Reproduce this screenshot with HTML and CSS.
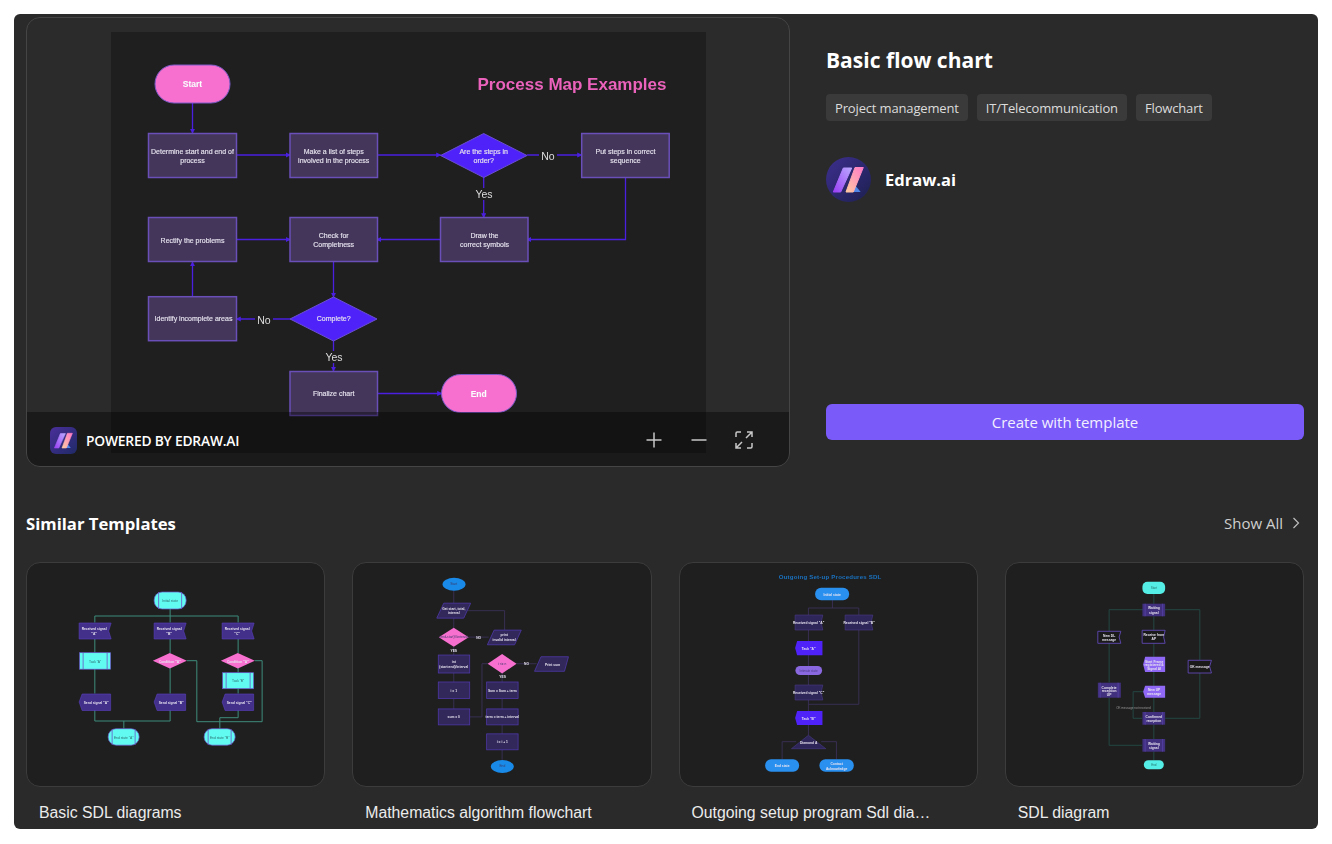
FILE: index.html
```html
<!DOCTYPE html>
<html lang="en">
<head>
  <meta charset="UTF-8" />
  <meta name="viewport" content="width=device-width, initial-scale=1.0"/>
  <title>Basic flow chart</title>
  <link rel="stylesheet" href="styles.css">
</head>
<body>
  <main class="panel">
    <section class="top">
      <div class="preview">
        <!-- viewBox uses the coordinates of the page so shapes are easy to measure -->
        <svg class="chart" viewBox="111 32 595 421" width="595" height="421">
          <defs>
            <marker id="arrowBlue" viewBox="0 0 6 6" refX="5" refY="3" markerWidth="4" markerHeight="4" markerUnits="strokeWidth" orient="auto"><path d="M0 0L6 3L0 6Z" fill="#4a1fe0"/></marker>
            <linearGradient id="barLeft" x1="0" y1="1" x2="1" y2="0"><stop offset="0" stop-color="#9a3ff5"/><stop offset="1" stop-color="#b9a8ff"/></linearGradient>
            <linearGradient id="barRight" x1="0" y1="1" x2="1" y2="0"><stop offset="0" stop-color="#ffc9a0"/><stop offset="1" stop-color="#ff7ac8"/></linearGradient>
            <symbol id="logoMark" viewBox="0 0 45 45">
              <path d="M17.3 11H25.7L14.7 35H7.3Z" fill="url(#barLeft)" stroke="url(#barLeft)" stroke-linejoin="round"/>
              <path d="M27.3 26L34.7 35H24Z" fill="#4f86e8"/>
              <path d="M29 10.5H37.3L27.3 35H20Z" fill="url(#barRight)" stroke="url(#barRight)" stroke-linejoin="round"/>
            </symbol>
          </defs>

          <text class="map-title" x="572" y="90">Process Map Examples</text>

          <g class="flow">
            <path d="M192.500 103V133"/>
            <path d="M236.500 155H290"/>
            <path d="M377 155H440.500"/>
            <path d="M527 155H581.500"/>
            <path d="M483.700 177V217.500"/>
            <path d="M625.500 177.500V239.500H527"/>
            <path d="M440.500 239.500H377"/>
            <path d="M236.500 239.500H290"/>
            <path d="M333.500 262V297"/>
            <path d="M290 319H236.500"/>
            <path d="M192.500 297V262"/>
            <path d="M333.500 341V371"/>
            <path d="M377 393.500H441.500"/>
          </g>

          <rect class="pill" x="155" y="65" width="75" height="38" rx="19"/>
          <rect class="pill" x="441.500" y="374.500" width="75" height="38" rx="19"/>
          <g class="box">
            <rect x="148.500" y="133.500" width="88" height="44"/>
            <rect x="290" y="133.500" width="87.500" height="44"/>
            <rect x="581.700" y="133.500" width="87.500" height="44"/>
            <rect x="148.500" y="217.500" width="88" height="44"/>
            <rect x="290" y="217.500" width="87.500" height="44"/>
            <rect x="440.500" y="217.500" width="87.500" height="44"/>
            <rect x="148.500" y="296.700" width="88" height="44"/>
            <rect x="290" y="371.500" width="87.500" height="44"/>
          </g>
          <g class="decision">
            <path d="M440.500 155.500L483.700 133.500L527 155.500L483.700 177.500Z"/>
            <path d="M290 319L333.500 297L377 319L333.500 341Z"/>
          </g>

          <g class="node-text">
            <text class="strong" x="192.500" y="87">Start</text>
            <text class="strong" x="478.700" y="397">End</text>
            <text x="192.500" y="153.500">Determine start and end of</text>
            <text x="192.500" y="162.500">process</text>
            <text x="333.700" y="153.500">Make a list of steps</text>
            <text x="333.700" y="162.500">involved in the process</text>
            <text x="483.700" y="153.500">Are the steps in</text>
            <text x="483.700" y="162.500">order?</text>
            <text x="625.500" y="153.500">Put steps in correct</text>
            <text x="625.500" y="162.500">sequence</text>
            <text x="192.500" y="242.500">Rectify the problems</text>
            <text x="333.700" y="238">Check for</text>
            <text x="333.700" y="246.500">Completness</text>
            <text x="484.500" y="238">Draw the</text>
            <text x="484.500" y="246.500">correct symbols</text>
            <text x="193.500" y="321">Identify incomplete areas</text>
            <text x="333.700" y="321">Complete?</text>
            <text x="333.700" y="396">Finalize chart</text>
          </g>
          <g class="flow-label">
            <rect class="label-bg" x="539" y="149" width="18" height="12"/>
            <text x="548" y="159.500">No</text>
            <rect class="label-bg" x="475" y="188" width="18" height="12"/>
            <text x="484" y="198">Yes</text>
            <rect class="label-bg" x="255" y="313" width="18" height="12"/>
            <text x="264" y="323.500">No</text>
            <rect class="label-bg" x="325" y="351" width="18" height="12"/>
            <text x="334" y="361">Yes</text>
          </g>
        </svg>

        <div class="preview-bar">
          <div class="logo-square"><svg viewBox="0 0 45 45" width="27" height="27"><use href="#logoMark"/></svg></div>
          <span class="powered">POWERED BY EDRAW.AI</span>
          <div class="bar-tools">
            <svg class="tool" viewBox="0 0 18 18" width="18" height="18"><path d="M9 1.500V16.500M1.500 9H16.500"/></svg>
            <svg class="tool" viewBox="0 0 18 18" width="18" height="18"><path d="M1.500 9H16.500"/></svg>
            <svg class="tool" viewBox="0 0 18 18" width="18" height="18"><path d="M1 6V2.200Q1 1 2.200 1H6M12 1H17V6M17 12V15.800Q17 17 15.800 17H12M6 17H1V12M11 7L16.500 1.500M7 11L1.500 16.500"/></svg>
          </div>
        </div>
      </div>

      <aside class="info">
        <h1>Basic flow chart</h1>
        <div class="tags">
          <span class="tag">Project management</span>
          <span class="tag">IT/Telecommunication</span>
          <span class="tag">Flowchart</span>
        </div>
        <div class="author">
          <div class="logo-round"><svg viewBox="0 0 45 45" width="45" height="45"><use href="#logoMark"/></svg></div>
          <span class="author-name">Edraw.ai</span>
        </div>
        <button class="create">Create with template</button>
      </aside>
    </section>

    <section class="similar">
      <div class="similar-head">
        <h2>Similar Templates</h2>
        <a class="show-all">Show All
          <svg viewBox="0 0 8 12" width="8" height="12"><path d="M1.500 1L6.500 6L1.500 11"/></svg>
        </a>
      </div>

      <div class="cards">
        <article class="card">
          <div class="thumb">
            <svg viewBox="27 563 297 223">
              <g class="link-green">
                <path d="M170 609V622.500"/>
                <path d="M94.700 622.500V616H238V622.500"/>
                <path d="M94.700 639V652.500"/>
                <path d="M94.700 669V693.500"/>
                <path d="M170 639V653"/>
                <path d="M170 668V693.500"/>
                <path d="M238 639V653"/>
                <path d="M238 668V672.500"/>
                <path d="M238 688.500V693.500"/>
                <path d="M94.700 710V721H170V710"/>
                <path d="M123.700 721V728.500"/>
                <path d="M238 710V717.700H219.700V728.500"/>
                <path d="M186.700 660.700H196.700V721.700H262V660.700H254.700"/>
              </g>
              <g class="cyan">
                <rect x="154" y="592" width="32" height="17" rx="8"/>
                <rect x="108" y="728.700" width="31" height="16.500" rx="8"/>
                <rect x="204" y="728.700" width="31" height="16.500" rx="8"/>
                <rect x="79.500" y="652.700" width="31" height="16.500"/>
                <rect x="222.500" y="672.700" width="31" height="16"/>
              </g>
              <g class="cyan-bars">
                <path d="M158.500 592V609M181.500 592V609M112 729V745M135 729V745M208 729V745M231 729V745"/>
                <path d="M83 653V669M107 653V669M226 673V689M250 673V689"/>
              </g>
              <g class="signal">
                <path d="M79 623H111L108.500 631L111 639H79Z"/>
                <path d="M154 623H186L183.500 631L186 639H154Z"/>
                <path d="M222 623H254L251.500 631L254 639H222Z"/>
                <path d="M82 694H110.500V710.500H82L79 702Z"/>
                <path d="M157 694H185.500V710.500H157L154 702Z"/>
                <path d="M225 694H253.500V710.500H225L222 702Z"/>
              </g>
              <g class="pink">
                <path d="M152.700 660.700L169.700 653L186.700 660.700L169.700 668.400Z"/>
                <path d="M220.700 660.700L237.700 653L254.700 660.700L237.700 668.400Z"/>
              </g>
              <g class="tiny">
                <text class="dark" x="170" y="602">Initial state</text>
                <text x="94" y="629.500">Received signal</text><text x="94" y="634.500">"A"</text>
                <text x="169" y="629.500">Received signal</text><text x="169" y="634.500">"B"</text>
                <text x="237" y="629.500">Received signal</text><text x="237" y="634.500">"C"</text>
                <text class="dark" x="95" y="662.500">Task "A"</text>
                <text x="169.700" y="662.500">Condition "A"</text>
                <text x="237.700" y="662.500">Condition "A"</text>
                <text class="dark" x="238" y="682">Task "B"</text>
                <text x="96" y="703.500">Send signal "A"</text>
                <text x="171" y="703.500">Send signal "B"</text>
                <text x="239" y="703.500">Send signal "C"</text>
                <text class="dark" x="123.500" y="738.500">End state "A"</text>
                <text class="dark" x="219.500" y="738.500">End state "B"</text>
              </g>
            </svg>
          </div>
          <p class="caption">Basic SDL diagrams</p>
        </article>

        <article class="card">
          <div class="thumb">
            <svg viewBox="353 563 298 223">
              <g class="link-dim">
                <path d="M454 590V603M454 618V628M454 647V655M454 673V682M454 699V709"/>
                <path d="M468 610.500H505V630"/>
                <path d="M469 637H489"/>
                <path d="M470 717H482.300V663.700H488"/>
                <path d="M517 663.700H537"/>
                <path d="M502.500 673V682M502.500 699V709M502.500 725V734M502.500 750V760"/>
              </g>
              <g class="blue">
                <ellipse cx="454.300" cy="584" rx="11.500" ry="6.500"/>
                <ellipse cx="502.700" cy="766.700" rx="11.500" ry="6.500"/>
              </g>
              <g class="outline">
                <path d="M444 603H471L464 618H437Z"/>
                <path d="M494.500 630H521.700L515 644.700H487.700Z"/>
                <path d="M541.500 656.700H569L565 671.300H535Z"/>
                <rect x="438.500" y="655" width="31.500" height="18"/>
                <rect x="438.500" y="682" width="31.500" height="16.500"/>
                <rect x="438.500" y="709" width="31.500" height="16"/>
                <rect x="487" y="682" width="31.500" height="16.500"/>
                <rect x="487" y="709" width="31.500" height="16"/>
                <rect x="487" y="734" width="31.500" height="16"/>
              </g>
              <g class="pink">
                <path d="M439 637.200L454 627.700L469 637.200L454 646.700Z"/>
                <path d="M488 663.700L502.500 654L517 663.700L502.500 673.500Z"/>
              </g>
              <g class="tiny">
                <text x="454" y="609.500">Get start, total,</text><text x="454" y="614">interval</text>
                <text x="504.500" y="636">print</text><text x="504.500" y="640.500">invalid interval</text>
                <text x="479" y="638.500">NO</text>
                <text x="454" y="651.500">YES</text>
                <text x="454" y="663">int</text><text x="454" y="667.500">(start:end)/interval</text>
                <text x="454" y="692">i = 1</text>
                <text x="454" y="718.500">sum = 0</text>
                <text x="527" y="665">NO</text>
                <text x="553" y="665.500">Print sum</text>
                <text x="503" y="678.500">YES</text>
                <text x="502.700" y="692">Sum = Sum + term</text>
                <text x="502.700" y="718.500">term = term + interval</text>
                <text x="502.700" y="743.500">i = i + 1</text>
              </g>
              <g class="tiny-dim">
                <text x="454" y="584.500">Start</text>
                <text x="454" y="638">(end-start)%interval</text>
                <text x="502.500" y="665">i &lt;= n</text>
                <text x="502.700" y="767.500">End</text>
              </g>
            </svg>
          </div>
          <p class="caption">Mathematics algorithm flowchart</p>
        </article>

        <article class="card">
          <div class="thumb">
            <svg viewBox="680 563 297 223">
              <text class="sdl-title" x="830" y="579">Outgoing Set-up Procedures SDL</text>
              <g class="link-dim">
                <path d="M832.300 600V608M808.300 615V608H858.700V615"/>
                <path d="M808.300 630V641M808.300 655V666M808.300 675V685M808.300 700V711M808.300 725V735.300"/>
                <path d="M858.700 630V704.300H808.300"/>
                <path d="M782 759.300V741.700H796M821 741.700H836.300V759.300"/>
              </g>
              <g class="sky">
                <rect x="815" y="587.700" width="34" height="12.500" rx="6"/>
                <rect x="765" y="759.300" width="34" height="12.500" rx="6"/>
                <rect x="819.300" y="759.300" width="34.400" height="12.500" rx="6"/>
              </g>
              <g class="signal-dim">
                <path d="M795 615H822.700L821 622.500L822.700 630H795Z"/>
                <path d="M845 615H872.700L871 622.500L872.700 630H845Z"/>
                <path d="M795 685H822.700L821 692.500L822.700 700H795Z"/>
                <path d="M791.300 748.700L808.300 735.300L825.700 748.700Z"/>
              </g>
              <g class="violet">
                <path d="M797 641H822.300V655.300H797L795 648Z"/>
                <path d="M797 711H822.300V725H797L795 718Z"/>
              </g>
              <rect class="lilac" x="795.300" y="666" width="26.700" height="9" rx="4.500"/>
              <g class="tiny">
                <text x="832" y="595.500">Initial state</text>
                <text x="808.500" y="624">Received signal "A"</text>
                <text x="859" y="624">Received signal "B"</text>
                <text x="808.500" y="649.500">Task "A"</text>
                <text x="808.500" y="694">Received signal "C"</text>
                <text x="808.500" y="719.500">Task "B"</text>
                <text x="808.500" y="744">Diamond A</text>
                <text x="782" y="767">End state</text>
                <text x="836.500" y="764.500">Contact</text>
                <text x="836.500" y="769.500">Acknowledge</text>
              </g>
              <text class="tiny-dim-text" x="808.500" y="672">Intimate state</text>
            </svg>
          </div>
          <p class="caption">Outgoing setup program Sdl diagram</p>
        </article>

        <article class="card">
          <div class="thumb">
            <svg viewBox="1006 563 297 223">
              <g class="link-teal">
                <path d="M1153.700 594V760"/>
                <path d="M1109 631V609.700H1199.700V660"/>
                <path d="M1109 643V682.500M1109 697.700V745.300H1142"/>
                <path d="M1199.700 673V718.300H1165"/>
                <path d="M1143 691.700H1133V718.300H1142"/>
              </g>
              <g class="cyan-plain">
                <rect x="1142.300" y="581.700" width="22.700" height="12.300" rx="5"/>
                <rect x="1143.700" y="760.300" width="20" height="9" rx="4.500"/>
              </g>
              <g class="state">
                <rect x="1142.300" y="603.700" width="22.700" height="12.600"/>
                <rect x="1097.700" y="682.700" width="23" height="15"/>
                <rect x="1142.300" y="712" width="22.700" height="12.700"/>
                <rect x="1142.300" y="739" width="22.700" height="12.700"/>
              </g>
              <g class="state-bars">
                <path d="M1145 603.700V616.300M1162.500 603.700V616.300M1100 682.700V697.700M1118 682.700V697.700M1145 712V724.700M1162.500 712V724.700M1145 739V751.700M1162.500 739V751.700"/>
              </g>
              <g class="signal-black">
                <path d="M1097.700 631.300H1120.700L1119 637L1120.700 643.300H1097.700Z"/>
                <path d="M1142 630.300H1165L1163.500 637L1165 643.300H1142Z"/>
                <path d="M1188 660.300H1211.300L1209.500 666.500L1211.300 673H1188Z"/>
              </g>
              <g class="lavender">
                <path d="M1145 656.700H1165V672H1145L1143 664.500Z"/>
                <path d="M1145 685.700H1165V697.700H1145L1143 691.700Z"/>
              </g>
              <g class="tiny">
                <text x="1109" y="636.500">New DL</text><text x="1109" y="640.500">message</text>
                <text x="1153.700" y="635.500">Receive from</text><text x="1153.700" y="640">AP</text>
                <text x="1199.500" y="668">OK message</text>
                <text x="1153.700" y="609">Waiting</text><text x="1153.700" y="613.500">signal</text>
                <text x="1154" y="662.500">Start Frame</text><text x="1154" y="666">registered &amp;</text><text x="1154" y="669.500">Signal AI</text>
                <text x="1154" y="690.500">New UP</text><text x="1154" y="695">message</text>
                <text x="1109" y="688.500">Complete</text><text x="1109" y="692">reception</text><text x="1109" y="696">UP</text>
                <text x="1153.700" y="717.500">Confirmed</text><text x="1153.700" y="722">reception</text>
                <text x="1153.700" y="744.500">Waiting</text><text x="1153.700" y="749">signal</text>
              </g>
              <text class="ok-label" x="1133.300" y="708.500">OK message not received</text>
              <g class="tiny-dark">
                <text x="1153.700" y="589">Start</text>
                <text x="1153.700" y="766">End</text>
              </g>
            </svg>
          </div>
          <p class="caption">SDL diagram</p>
        </article>
      </div>
    </section>
  </main>
</body>
</html>
```

FILE: styles.css
```css
html, body {
  margin: 0;
  height: 844px;
  overflow: hidden;
  background: #fff;
}
body {
  font-family: 'Open Sans', 'Noto Sans', sans-serif;
  color: #fff;
  padding-top: 14px;
  box-sizing: border-box;
}
.panel {
  margin: 0 14px;
  height: 815px;
  padding: 3px 14px 0 12px;
  box-sizing: border-box;
  background: #2a2a2a;
  border-radius: 6px;
  overflow: hidden;
}

/* top row */
.top {
  display: flex;
  gap: 36px;
  height: 450px;
}
.preview {
  position: relative;
  flex: 0 0 764px;
  box-sizing: border-box;
  padding: 14px 0 0 1px;
  display: flex;
  justify-content: center;
  background: #2b2b2b;
  border: 1px solid #454545;
  border-radius: 14px;
  overflow: hidden;
}
.chart {
  display: block;
  background: #1f1f1f;
  filter: blur(0.45px);
}
.preview-bar {
  position: absolute;
  left: 0;
  right: 0;
  bottom: 0;
  height: 54px;
  padding: 2px 36px 0 23px;
  box-sizing: border-box;
  display: flex;
  align-items: center;
  background: rgba(0, 0, 0, 0.38);
}
.logo-square {
  width: 27px;
  height: 27px;
  border-radius: 6px;
  background: linear-gradient(135deg, #4a2f9a, #1f2a66);
}
.logo-square svg, .logo-round svg {
  display: block;
}
.powered {
  margin-left: 9px;
  font-size: 13.800px;
  font-weight: 600;
  letter-spacing: -0.2px;
}
.bar-tools {
  margin-left: auto;
  display: flex;
  gap: 27px;
}
.tool {
  display: block;
  fill: none;
  stroke: #c8c8c8;
  stroke-width: 1.500;
}

/* right column */
.info {
  flex: 1;
  display: flex;
  flex-direction: column;
  padding-bottom: 27px;
}
.info h1 {
  margin: 28px 0 0;
  font-size: 21px;
  line-height: 30px;
  font-weight: 700;
}
.tags {
  display: flex;
  gap: 9px;
  margin-top: 19px;
}
.tag {
  padding: 1px 9px 0;
  height: 26px;
  line-height: 26px;
  font-size: 13px;
  letter-spacing: -0.15px;
  color: #dcdcdc;
  background: #3a3a3a;
  border-radius: 4px;
}
.author {
  display: flex;
  align-items: center;
  gap: 14px;
  margin-top: 36px;
}
.logo-round {
  width: 45px;
  height: 45px;
  border-radius: 50%;
  background: linear-gradient(135deg, #3d2f8f, #1d2050);
}
.author-name {
  font-size: 16.500px;
  font-weight: 700;
}
.create {
  margin-top: auto;
  height: 36px;
  border: 0;
  border-radius: 6px;
  background: #7a5af8;
  color: #f2efff;
  font-family: inherit;
  font-size: 15px;
}

/* similar templates */
.similar-head {
  display: flex;
  align-items: center;
  justify-content: space-between;
  height: 24px;
  margin: 44px 0 27px;
}
.similar-head h2 {
  margin: 0;
  font-size: 16.700px;
  font-weight: 700;
}
.show-all {
  display: flex;
  align-items: center;
  gap: 9px;
  padding-right: 4px;
  font-size: 15px;
  color: #cfcfcf;
}
.show-all svg {
  fill: none;
  stroke: #bdbdbd;
  stroke-width: 1.200;
}
.cards {
  display: grid;
  grid-template-columns: repeat(4, minmax(0, 1fr));
  gap: 27px;
}
.thumb {
  height: 225px;
  box-sizing: border-box;
  background: #1f1f1f;
  border: 1px solid #3c3c3c;
  border-radius: 14px;
  overflow: hidden;
}
.thumb svg {
  display: block;
  width: 100%;
  height: 100%;
  filter: blur(0.45px);
}
.caption {
  margin: 16px 0 0;
  padding: 0 46px 0 13px;
  font-family: 'Liberation Sans', Arial, sans-serif;
  font-size: 15.800px;
  line-height: 20px;
  color: #ececec;
  white-space: nowrap;
  overflow: hidden;
  text-overflow: ellipsis;
}

/* main diagram */
.map-title {
  font-family: 'Liberation Sans', Arial, sans-serif;
  font-size: 17px;
  font-weight: 700;
  fill: #ea62bb;
  text-anchor: middle;
}
.flow path {
  fill: none;
  stroke: #4a1fe0;
  stroke-width: 1.300;
  marker-end: url(#arrowBlue);
}
.pill {
  fill: #f76fcf;
  stroke: #7a5bc8;
}
.box rect {
  fill: #43365a;
  stroke: #6a4fb8;
  stroke-width: 1.500;
}
.decision path {
  fill: #5022fa;
  stroke: #6a4fd0;
}
.node-text text, .flow-label text {
  font-family: 'Liberation Sans', Arial, sans-serif;
  text-anchor: middle;
}
.node-text text {
  font-size: 7px;
  fill: #e6e2ee;
  stroke: #e6e2ee;
  stroke-width: 0.150;
}
.node-text .strong {
  font-size: 8.500px;
  font-weight: 700;
  fill: #fff;
}
.flow-label text {
  font-size: 10.500px;
  fill: #dedede;
}
.label-bg {
  fill: #1f1f1f;
}

/* small diagrams */
.tiny text, .tiny-dim text, .tiny-dark text, .sdl-title, .tiny-dim-text, .ok-label {
  font-family: 'Liberation Sans', Arial, sans-serif;
  text-anchor: middle;
}
.tiny text {
  font-size: 3.300px;
  font-weight: 700;
  fill: #e8e4f0;
}
.tiny .dark {
  fill: #2c6c6c;
  font-weight: 400;
}
.tiny-dim text {
  font-size: 3.300px;
  fill: #3a3a6a;
}
.tiny-dark text {
  font-size: 3px;
  fill: #24706c;
}
.sdl-title {
  font-size: 6.100px;
  font-weight: 700;
  fill: #1a72c0;
  letter-spacing: 0.200px;
}
.tiny-dim-text {
  font-size: 3px;
  fill: #4a3a80;
}
.ok-label {
  font-size: 3px;
  fill: #9a9a9a;
}
.link-green path {
  fill: none;
  stroke: #3f8c7c;
  stroke-width: 1;
}
.link-dim path {
  fill: none;
  stroke: #3b3158;
  stroke-width: 0.900;
}
.link-teal path {
  fill: none;
  stroke: #24514c;
  stroke-width: 0.800;
}
.cyan rect {
  fill: #62fbf2;
  stroke: #6a55c8;
  stroke-width: 0.700;
}
.cyan-bars path {
  stroke: #6a55c8;
  stroke-width: 0.800;
}
.cyan-plain rect {
  fill: #55eee6;
}
.signal path {
  fill: #42308a;
  stroke: #5a3fc0;
  stroke-width: 0.600;
}
.pink path {
  fill: #f76fcf;
}
.blue ellipse {
  fill: #1a8ae8;
}
.outline path, .outline rect {
  fill: #32285a;
  stroke: #4f38a8;
  stroke-width: 0.800;
}
.sky rect {
  fill: #2a90f0;
}
.signal-dim path {
  fill: #2e2558;
  stroke: #4a3a88;
  stroke-width: 0.600;
}
.violet path {
  fill: #5022fa;
}
.lilac {
  fill: #8a68e0;
}
.state rect {
  fill: #41307e;
}
.state-bars path {
  stroke: #5a45b0;
  stroke-width: 0.700;
}
.signal-black path {
  fill: #1a1a1a;
  stroke: #6a4fc8;
  stroke-width: 0.800;
}
.lavender path {
  fill: #8f68f5;
}
```
